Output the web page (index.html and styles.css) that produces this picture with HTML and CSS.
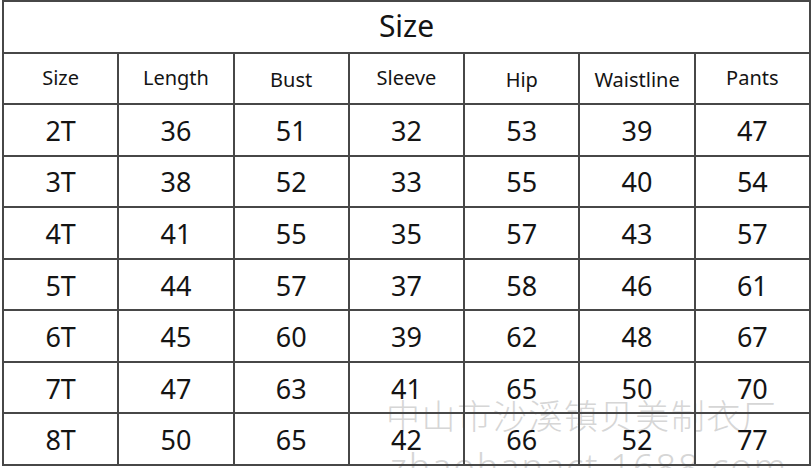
FILE: index.html
```html
<!DOCTYPE html>
<html lang="en">
<head>
<meta charset="utf-8">
<title>Size chart</title>
<link rel="stylesheet" href="styles.css">
</head>
<body>
<div class="chart">
  <div class="watermark">
    <div class="wm-cn">中山市沙溪镇贝美制衣厂</div>
    <div class="wm-url">zhaohanact.1688.com</div>
  </div>
  <div class="grid">
    <div class="cell title">Size</div>
    <div class="cell head">Size</div>
    <div class="cell head">Length</div>
    <div class="cell head low">Bust</div>
    <div class="cell head">Sleeve</div>
    <div class="cell head low">Hip</div>
    <div class="cell head low">Waistline</div>
    <div class="cell head">Pants</div>

    <div class="cell">2T</div><div class="cell">36</div><div class="cell">51</div><div class="cell">32</div><div class="cell">53</div><div class="cell">39</div><div class="cell">47</div>
    <div class="cell">3T</div><div class="cell">38</div><div class="cell">52</div><div class="cell">33</div><div class="cell">55</div><div class="cell">40</div><div class="cell">54</div>
    <div class="cell">4T</div><div class="cell">41</div><div class="cell">55</div><div class="cell">35</div><div class="cell">57</div><div class="cell">43</div><div class="cell">57</div>
    <div class="cell">5T</div><div class="cell">44</div><div class="cell">57</div><div class="cell">37</div><div class="cell">58</div><div class="cell">46</div><div class="cell">61</div>
    <div class="cell">6T</div><div class="cell">45</div><div class="cell">60</div><div class="cell">39</div><div class="cell">62</div><div class="cell">48</div><div class="cell">67</div>
    <div class="cell">7T</div><div class="cell">47</div><div class="cell">63</div><div class="cell">41</div><div class="cell">65</div><div class="cell">50</div><div class="cell">70</div>
    <div class="cell">8T</div><div class="cell">50</div><div class="cell">65</div><div class="cell">42</div><div class="cell">66</div><div class="cell">52</div><div class="cell">77</div>
  </div>
</div>
</body>
</html>
```

FILE: styles.css
```css
html, body {
  margin: 0;
  padding: 0;
  background: #ffffff;
}

body {
  width: 811px;
  height: 468px;
  overflow: hidden;
  font-family: "Noto Sans", "Open Sans", "DejaVu Sans", sans-serif;
  color: #141414;
}

.chart {
  position: relative;
  width: 811px;
  height: 468px;
  overflow: hidden;
}

.grid {
  position: relative;
  margin-left: 2px;
  width: 809px;
  height: 466px;
  box-sizing: border-box;
  border-left: 2px solid #474747;
  border-top: 2px solid #474747;
  display: grid;
  grid-template-columns: repeat(7, 1fr);
  grid-template-rows: repeat(9, 1fr);
}

.cell {
  border-right: 2px solid #474747;
  border-bottom: 2px solid #474747;
  display: flex;
  align-items: center;
  justify-content: center;
  font-size: 27px;
  line-height: 1;
  padding-top: 1px;
}

.title {
  grid-column: 1 / span 7;
  font-size: 30px;
  padding-bottom: 3px;
}

.head {
  font-size: 20px;
  padding-bottom: 2px;
}

.head.low {
  padding-top: 4px;
  padding-bottom: 0;
}

.watermark {
  position: absolute;
  left: 386px;
  top: 395px;
  color: #d6d6d6;
  pointer-events: none;
  white-space: nowrap;
}

.wm-cn {
  font-family: "Noto Sans CJK SC", sans-serif;
  font-size: 34px;
  font-weight: 300;
  letter-spacing: 1.6px;
  line-height: 40px;
}

.wm-url {
  font-family: "Noto Sans", sans-serif;
  font-size: 36px;
  font-weight: 300;
  letter-spacing: 2px;
  line-height: 36px;
  margin-top: 14px;
  padding-left: 4px;
}
```
